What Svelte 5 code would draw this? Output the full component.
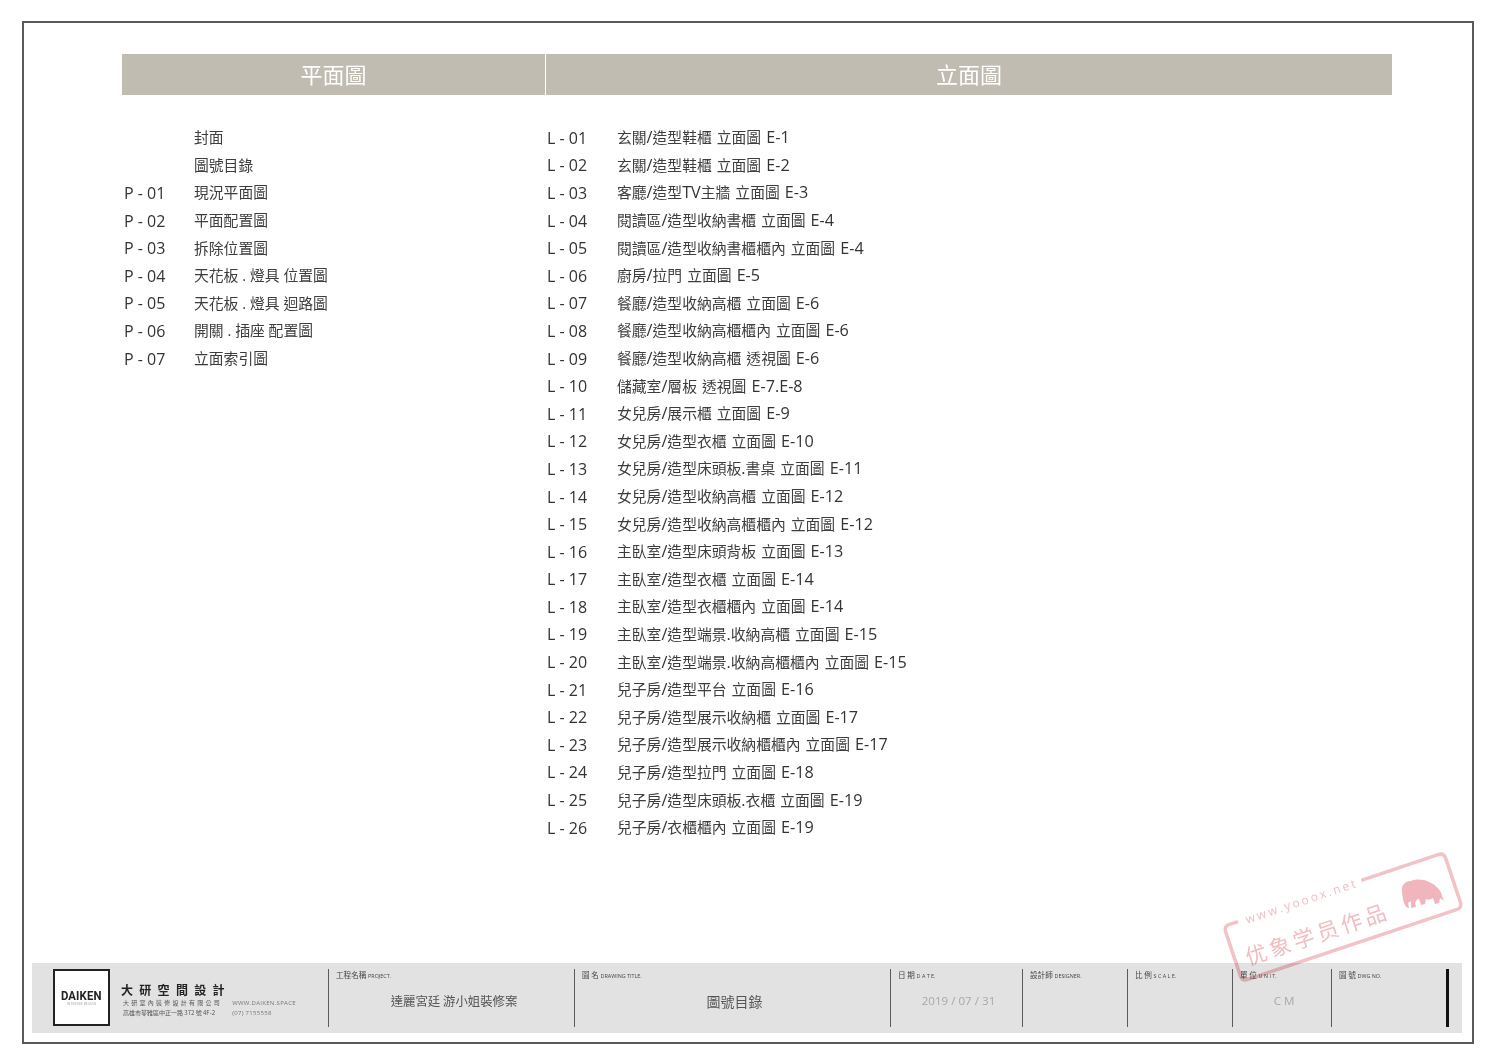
<script>
  const planRows = [
    ["", "封面"],
    ["", "圖號目錄"],
    ["P - 01", "現況平面圖"],
    ["P - 02", "平面配置圖"],
    ["P - 03", "拆除位置圖"],
    ["P - 04", "天花板 . 燈具 位置圖"],
    ["P - 05", "天花板 . 燈具 迴路圖"],
    ["P - 06", "開關 . 插座 配置圖"],
    ["P - 07", "立面索引圖"]
  ];

  const elevationNames = [
    "玄關/造型鞋櫃 立面圖 E-1",
    "玄關/造型鞋櫃 立面圖 E-2",
    "客廳/造型TV主牆 立面圖 E-3",
    "閱讀區/造型收納書櫃 立面圖 E-4",
    "閱讀區/造型收納書櫃櫃內 立面圖 E-4",
    "廚房/拉門 立面圖 E-5",
    "餐廳/造型收納高櫃 立面圖 E-6",
    "餐廳/造型收納高櫃櫃內 立面圖 E-6",
    "餐廳/造型收納高櫃 透視圖 E-6",
    "儲藏室/層板 透視圖 E-7.E-8",
    "女兒房/展示櫃 立面圖 E-9",
    "女兒房/造型衣櫃 立面圖 E-10",
    "女兒房/造型床頭板.書桌 立面圖 E-11",
    "女兒房/造型收納高櫃 立面圖 E-12",
    "女兒房/造型收納高櫃櫃內 立面圖 E-12",
    "主臥室/造型床頭背板 立面圖 E-13",
    "主臥室/造型衣櫃 立面圖 E-14",
    "主臥室/造型衣櫃櫃內 立面圖 E-14",
    "主臥室/造型端景.收納高櫃 立面圖 E-15",
    "主臥室/造型端景.收納高櫃櫃內 立面圖 E-15",
    "兒子房/造型平台 立面圖 E-16",
    "兒子房/造型展示收納櫃 立面圖 E-17",
    "兒子房/造型展示收納櫃櫃內 立面圖 E-17",
    "兒子房/造型拉門 立面圖 E-18",
    "兒子房/造型床頭板.衣櫃 立面圖 E-19",
    "兒子房/衣櫃櫃內 立面圖 E-19"
  ];

  const elevationRows = elevationNames.map((name, i) => [
    "L - " + String(i + 1).padStart(2, "0"),
    name
  ]);

  // the latin runs sit a little larger than the CJK in the drawing
  const runs = (name) => name.split(/([A-Za-z0-9./-]+)/);

  const titleCells = [
    { zh: "工程名稱", en: "PROJECT.", value: "達麗宮廷 游小姐裝修案", kind: "project", width: 246 },
    { zh: "圖 名", en: "DRAWING TITLE.", value: "圖號目錄", kind: "title", width: 316 },
    { zh: "日 期", en: "D A T E.", value: "2019 / 07 / 31", kind: "faint", width: 132 },
    { zh: "設計師", en: "DESIGNER.", value: "", kind: "", width: 105 },
    { zh: "比 例", en: "S C A L E.", value: "", kind: "", width: 105 },
    { zh: "單 位", en: "U N I T.", value: "C M", kind: "faint", width: 99 },
    { zh: "圖 號", en: "DWG NO.", value: "", kind: "", width: 115 }
  ];
</script>

<div class="sheet">
  <div class="frame">
    <div class="heads">
      <div class="head">平面圖</div>
      <div class="head">立面圖</div>
    </div>

    <div class="lists">
      <div class="list">
        {#each planRows as [code, name]}
          <div class="row"><span class="code">{code}</span><span class="name">{name}</span></div>
        {/each}
      </div>
      <div class="list elevations">
        {#each elevationRows as [code, name]}
          <div class="row">
            <span class="code">{code}</span>
            <span class="name">
              {#each runs(name) as run, i}
                {#if i % 2}<span class="latin">{run}</span>{:else}{run}{/if}
              {/each}
            </span>
          </div>
        {/each}
      </div>
    </div>

    <div class="titleblock">
      <div class="brand">
        <div class="logo">
          <span class="logo-word">DAIKEN</span>
          <span class="logo-sub">INTERIOR DESIGN</span>
        </div>
        <div class="brand-text">
          <div class="brand-name">大研空間設計</div>
          <div class="brand-lines">
            <div>
              <div class="spaced">大 研 室 內 裝 修 設 計 有 限 公 司</div>
              <div>高雄市苓雅區中正一路 372 號 4F-2</div>
            </div>
            <div class="brand-web">
              <div>WWW.DAIKEN.SPACE</div>
              <div>(07) 7155558</div>
            </div>
          </div>
        </div>
      </div>

      {#each titleCells as cell}
        <div class="cell" style="width: {cell.width}px">
          <div class="cell-label">{cell.zh} <small>{cell.en}</small></div>
          <div class="cell-value {cell.kind}">{cell.value}</div>
        </div>
      {/each}
      <div class="endbar"></div>
    </div>
  </div>

  <svg class="stamp" viewBox="1215 845 255 145" width="255" height="145" aria-hidden="true">
    <g transform="translate(1343 917) rotate(-18.5)">
      <path
        class="stamp-line"
        d="M -101 -29 H -110 Q -116 -29 -116 -23 L -116 23 Q -116 29 -110 29 H 110 Q 116 29 116 23 L 116 -23 Q 116 -29 110 -29 H 29"
      />
      <text class="stamp-url" x="-93" y="-24">www.yooox.net</text>
      <text class="stamp-zh" x="-105" y="16">优象学员作品</text>
    </g>
    <path
      class="stamp-fill"
      d="M1402 892 C1401 885 1405 881 1411 881 C1416 879 1423 879 1429 882 C1436 885 1441 890 1442 896 L1444 901 L1440 898 L1439 903 L1435 904 L1433 898 C1430 900 1428 900 1426 899 L1425 904 L1421 905 L1419 899 C1417 899 1416 901 1415 903 L1416 907 L1411 908 L1411 901 L1408 903 L1409 908 C1405 908 1403 902 1402 892 Z"
    />
  </svg>
</div>

<style>
  :global(body) {
    margin: 0;
    background: #fff;
  }

  .sheet {
    position: relative;
    width: 1500px;
    height: 1061px;
    padding: 21px 0 0 22px;
    box-sizing: border-box;
    font-family: "Open Sans", "Noto Sans CJK TC", sans-serif;
    color: #3d3d3d;
  }

  .frame {
    width: 1452px;
    height: 1023px;
    box-sizing: border-box;
    border: 2px solid #5a5a5a;
    padding: 31px 0 9px;
    display: flex;
    flex-direction: column;
  }

  .heads {
    margin-left: 98px;
    width: 1270px;
    display: grid;
    grid-template-columns: 423px 1fr;
    gap: 1px;
  }

  .head {
    height: 41px;
    background: #c0bcb1;
    color: #fff;
    font-size: 22px;
    line-height: 39px;
    text-align: center;
    font-family: "Noto Sans CJK TC", sans-serif;
  }

  .lists {
    margin: 29px 0 0 100px;
    display: grid;
    grid-template-columns: 423px 1fr;
  }

  .row {
    height: 27.6px;
    display: grid;
    grid-template-columns: 70px 1fr;
    align-items: center;
    white-space: nowrap;
  }

  .name {
    font-size: 14.8px;
    position: relative;
    top: -1px;
  }

  .elevations .name {
    word-spacing: 1.2px;
  }

  .latin {
    font-size: 16.2px;
    line-height: 1;
    color: #333;
  }

  .code {
    font-size: 16px;
    color: #333;
  }

  .titleblock {
    margin: auto 0 0 8px;
    width: 1430px;
    height: 70px;
    background: #e2e2e2;
    display: flex;
    padding: 6px 0;
    box-sizing: border-box;
    font-family: "Noto Sans CJK TC", sans-serif;
    color: #444;
    filter: blur(0.35px);
  }

  .brand {
    width: 296px;
    flex: none;
    display: flex;
    padding-left: 21px;
    box-sizing: border-box;
  }

  .logo {
    width: 57px;
    height: 57px;
    flex: none;
    box-sizing: border-box;
    border: 2px solid #222;
    background: #fff;
    display: flex;
    flex-direction: column;
    align-items: center;
    justify-content: center;
    color: #222;
  }

  .logo-word {
    font-family: "Roboto", sans-serif;
    font-size: 13.5px;
    font-weight: 700;
    line-height: 13px;
    letter-spacing: 0.2px;
    transform: scaleX(0.84);
  }

  .logo-sub {
    font-size: 3px;
    line-height: 4px;
    color: #999;
    letter-spacing: 0.3px;
  }

  .brand-text {
    margin: 13px 0 0 11px;
  }

  .brand-name {
    font-size: 12px;
    line-height: 16px;
    font-weight: 700;
    letter-spacing: 6.3px;
    color: #222;
    white-space: nowrap;
  }

  .brand-lines {
    margin: 0 0 0 2px;
    display: flex;
    gap: 12px;
    font-size: 6px;
    line-height: 10px;
    white-space: nowrap;
    color: #555;
  }

  .spaced {
    letter-spacing: 0.45px;
  }

  .brand-web {
    color: #777;
    font-family: "Open Sans", sans-serif;
    letter-spacing: 0.3px;
  }

  .cell {
    flex: none;
    box-sizing: border-box;
    border-left: 1px solid #5a5a5a;
    padding-left: 7px;
    display: flex;
    flex-direction: column;
  }

  .cell-label {
    font-size: 7.6px;
    line-height: 12px;
    color: #444;
    white-space: nowrap;
  }

  .cell-label small {
    font-family: "Open Sans", sans-serif;
    font-size: 5.4px;
  }

  .cell-value {
    margin: 9px 0 0 -3px;
    text-align: center;
    line-height: 20px;
    white-space: nowrap;
  }

  .cell-value.project {
    color: #555;
    font-size: 12.4px;
    padding-left: 1px;
  }

  .cell-value.title {
    color: #555;
    font-size: 14px;
  }

  .cell-value.faint {
    color: #a8a8a8;
    font-size: 11.6px;
    font-family: "Open Sans", sans-serif;
  }

  .endbar {
    width: 3px;
    background: #111;
  }

  .stamp {
    position: absolute;
    left: 1215px;
    top: 845px;
    mix-blend-mode: multiply;
    pointer-events: none;
    filter: blur(0.4px);
  }

  .stamp-line {
    fill: none;
    stroke: #f2c2c7;
    stroke-width: 3.5;
  }

  .stamp-url {
    fill: #f1bcc2;
    font-family: "Open Sans", sans-serif;
    font-size: 12px;
    letter-spacing: 2.4px;
  }

  .stamp-zh {
    fill: #f1bcc2;
    font-family: "Noto Sans CJK SC", sans-serif;
    font-size: 21.5px;
    letter-spacing: 3.6px;
  }

  .stamp-fill {
    fill: #f1b6bd;
  }
</style>
